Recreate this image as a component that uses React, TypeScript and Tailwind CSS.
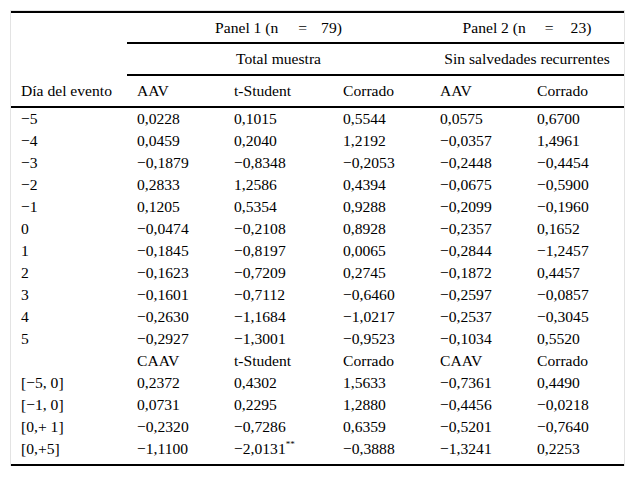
import React from "react";

const rows: string[][] = [
  ["−5", "0,0228", "0,1015", "0,5544", "0,0575", "0,6700"],
  ["−4", "0,0459", "0,2040", "1,2192", "−0,0357", "1,4961"],
  ["−3", "−0,1879", "−0,8348", "−0,2053", "−0,2448", "−0,4454"],
  ["−2", "0,2833", "1,2586", "0,4394", "−0,0675", "−0,5900"],
  ["−1", "0,1205", "0,5354", "0,9288", "−0,2099", "−0,1960"],
  ["0", "−0,0474", "−0,2108", "0,8928", "−0,2357", "0,1652"],
  ["1", "−0,1845", "−0,8197", "0,0065", "−0,2844", "−1,2457"],
  ["2", "−0,1623", "−0,7209", "0,2745", "−0,1872", "0,4457"],
  ["3", "−0,1601", "−0,7112", "−0,6460", "−0,2597", "−0,0857"],
  ["4", "−0,2630", "−1,1684", "−1,0217", "−0,2537", "−0,3045"],
  ["5", "−0,2927", "−1,3001", "−0,9523", "−0,1034", "0,5520"],
  ["", "CAAV", "t-Student", "Corrado", "CAAV", "Corrado"],
  ["[−5, 0]", "0,2372", "0,4302", "1,5633", "−0,7361", "0,4490"],
  ["[−1, 0]", "0,0731", "0,2295", "1,2880", "−0,4456", "−0,0218"],
  ["[0,+ 1]", "−0,2320", "−0,7286", "0,6359", "−0,5201", "−0,7640"],
  ["[0,+5]", "−1,1100", "−2,0131", "−0,3888", "−1,3241", "0,2253"],
];

const cols = "grid grid-cols-[116px_97px_109px_97px_97px_97px]";

export default function App() {
  return (
    <div className="min-h-[477px] bg-white pl-[10px] pt-[10px] text-black font-['Liberation_Serif',serif] text-[15.6px]">
      <div className="w-[615px] border-x border-t border-[#e3e3e3]">
        <div className="border-t-2 border-black">
          {/* Header */}
          <div className="flex border-b-2 border-black">
            <div className="flex w-[116px] flex-col justify-end">
              <div className="flex h-[30px] items-center pl-[10px] leading-none">Día del evento</div>
            </div>
            <div className="flex w-[497px] flex-col">
              <div className="flex h-[31px] border-b-2 border-black leading-none">
                <div className="flex w-[303px] items-center justify-center">
                  Panel 1 (n<span className="inline-block w-[20px]" />=<span className="inline-block w-[14px]" />79)
                </div>
                <div className="flex w-[194px] items-center justify-center">
                  Panel 2 (n<span className="inline-block w-[19px]" />=<span className="inline-block w-[17px]" />23)
                </div>
              </div>
              <div className="flex h-[32px] border-b-2 border-black leading-none">
                <div className="flex w-[303px] items-center justify-center">Total muestra</div>
                <div className="flex w-[194px] items-center justify-center">Sin salvedades recurrentes</div>
              </div>
              <div className="grid h-[30px] grid-cols-[97px_109px_97px_97px_97px] items-center leading-none">
                <div className="pl-[10px]">AAV</div>
                <div className="pl-[10px]">t-Student</div>
                <div className="pl-[10px]">Corrado</div>
                <div className="pl-[10px]">AAV</div>
                <div className="pl-[10px]">Corrado</div>
              </div>
            </div>
          </div>
          {/* Body */}
          <div className="border-b-2 border-black pb-[4px]">
            {rows.map((r, i) => (
              <div key={i} className={`${cols} h-[22px] items-center leading-none`}>
                {r.map((c, j) => (
                  <div key={j} className="pl-[10px] whitespace-nowrap">
                    {c}
                    {i === 15 && j === 2 ? (
                      <span className="relative top-[-7px] text-[9px]">**</span>
                    ) : null}
                  </div>
                ))}
              </div>
            ))}
          </div>
        </div>
      </div>
    </div>
  );
}
